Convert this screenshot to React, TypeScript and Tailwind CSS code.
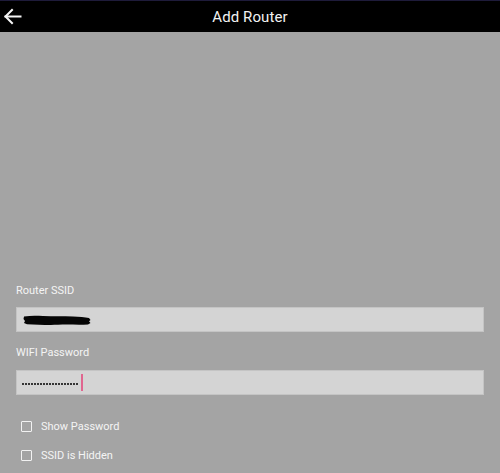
import React from "react";

export default function App() {
  const dots = Array.from({ length: 19 });
  return (
    <div
      className="w-[500px] h-[473px] bg-[#a4a4a4] flex flex-col overflow-hidden"
      style={{ fontFamily: "Roboto, 'Liberation Sans', sans-serif" }}
    >
      <div className="h-[32px] shrink-0 bg-black border-t border-[#1e1b3a] relative flex items-center justify-center">
        <svg
          className="absolute left-0 top-0"
          width="28"
          height="31"
          viewBox="0 0 28 31"
          fill="none"
          stroke="#f5f5f5"
          strokeWidth="2"
          strokeLinecap="square"
        >
          <path d="M5.5 15.5 H20.5" />
          <path d="M12 9 L5.5 15.5 L12 22" />
        </svg>
        <span className="text-[15px] leading-[18px] text-[#f2f2f2] tracking-[0.1px]">Add Router</span>
      </div>
      <div className="flex flex-col px-4 pt-[252px]">
        <div className="h-[13px] leading-[13px] text-[11px] text-[#f4f4f4]">Router SSID</div>
        <div className="mt-[10px] h-[25px] bg-[#d4d4d4] border border-[#c4c4c4] flex items-center pl-[6px]">
          <svg width="70" height="14" viewBox="0 0 70 14">
            <path
              d="M1 3.5 C8 2.5 14 2.8 20 3 C30 3.4 40 3 50 3.6 C56 4 62 4.2 66 5 L67.5 7 L66 8.3 L67.5 10 L65 11.5 C55 12 45 11.3 35 11.8 C25 12.2 14 11.6 4 11.2 L1 10 L2 8 L0.5 6 Z"
              fill="#050505"
            />
          </svg>
        </div>
        <div className="mt-[14px] h-[13px] leading-[13px] text-[11px] text-[#f4f4f4]">WIFI Password</div>
        <div className="mt-[11px] h-[25px] bg-[#d4d4d4] border border-[#c4c4c4] flex items-center pl-[5px]">
          <div className="flex items-center gap-[1px] mt-[3px]">
            {dots.map((_, i) => (
              <span key={i} className="w-[2px] h-[2px] rounded-full bg-black" />
            ))}
          </div>
          <span className="ml-[3px] w-[2px] h-[17px] bg-[#e0668f]" />
        </div>
        <div className="mt-[17px] h-[29px] flex items-center pl-[5px]">
          <span className="w-[11px] h-[11px] border-[1.5px] border-[#f2f2f2] rounded-[1px]" />
          <span className="ml-[9px] text-[11px] leading-[13px] text-[#f4f4f4]">Show Password</span>
        </div>
        <div className="h-[29px] flex items-center pl-[5px]">
          <span className="w-[11px] h-[11px] border-[1.5px] border-[#f2f2f2] rounded-[1px]" />
          <span className="ml-[9px] text-[11px] leading-[13px] text-[#f4f4f4]">SSID is Hidden</span>
        </div>
      </div>
    </div>
  );
}
